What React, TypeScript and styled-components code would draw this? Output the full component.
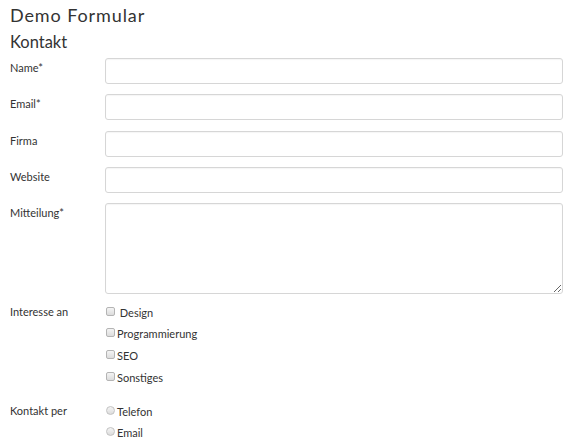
import React from "react";
import styled, { createGlobalStyle } from "styled-components";

const Global = createGlobalStyle`
  html, body { margin: 0; padding: 0; background: #fff; }
  body { font-family: Lato, "Open Sans", Arial, sans-serif; color: #333; }
  * { box-sizing: border-box; }
`;

const Page = styled.div`
  padding: 3px 13px 0 10px;
`;

const Title = styled.h1`
  margin: 0;
  font-size: 18px;
  font-weight: 400;
  letter-spacing: 0.9px;
  line-height: 24px;
  color: #333;
`;

const SubTitle = styled.h2`
  margin: 3px 0 4px;
  font-size: 16.5px;
  font-weight: 400;
  line-height: 24px;
  color: #333;
`;

const Row = styled.div<{ $gap?: number }>`
  display: grid;
  grid-template-columns: 95px 1fr;
  margin-bottom: ${(p) => (p.$gap ?? 10.3)}px;
`;

const Label = styled.label<{ $top?: number }>`
  font-size: 11px;
  line-height: 16px;
  padding-top: ${(p) => p.$top ?? 2}px;
  color: #333;
`;

const TextInput = styled.input`
  display: block;
  width: 100%;
  height: 26px;
  border: 1px solid #d6d6d6;
  border-radius: 3px;
  background: #fff;
  box-shadow: inset 0 1px 1px rgba(0, 0, 0, 0.04);
  font-family: inherit;
  font-size: 12px;
  padding: 4px 6px;
  outline: none;
`;

const TextArea = styled.textarea`
  display: block;
  width: 100%;
  height: 91px;
  border: 1px solid #d6d6d6;
  border-radius: 3px;
  background: #fff;
  box-shadow: inset 0 1px 1px rgba(0, 0, 0, 0.04);
  font-family: inherit;
  font-size: 12px;
  padding: 4px 6px;
  outline: none;
  resize: vertical;
`;

const Options = styled.div`
  display: flex;
  flex-direction: column;
`;

const Option = styled.label`
  display: flex;
  align-items: center;
  height: 21.7px;
  font-size: 11px;
  color: #333;
  white-space: pre;
`;

const Check = styled.input`
  appearance: none;
  width: 9px;
  height: 9px;
  margin: 0 2px 0 1px;
  border: 1px solid #b4b4b4;
  border-radius: 2px;
  background: linear-gradient(#f4f4f4, #dcdcdc);
  position: relative;
  top: -1px;
`;

const Radio = styled(Check)`
  border-radius: 50%;
  border-color: #c2c2c2;
`;

const interests = [" Design", "Programmierung", "SEO", "Sonstiges"];
const contacts = ["Telefon", "Email"];

export default function App() {
  return (
    <>
      <Global />
      <Page>
        <Title>Demo Formular</Title>
        <SubTitle>Kontakt</SubTitle>
        <Row>
          <Label $top={2}>Name*</Label>
          <TextInput />
        </Row>
        <Row>
          <Label>Email*</Label>
          <TextInput />
        </Row>
        <Row>
          <Label>Firma</Label>
          <TextInput />
        </Row>
        <Row>
          <Label>Website</Label>
          <TextInput />
        </Row>
        <Row $gap={7}>
          <Label>Mitteilung*</Label>
          <TextArea />
        </Row>
        <Row $gap={12.5}>
          <Label $top={3}>Interesse an</Label>
          <Options>
            {interests.map((t) => (
              <Option key={t}>
                <Check type="checkbox" />
                {t}
              </Option>
            ))}
          </Options>
        </Row>
        <Row $gap={0}>
          <Label $top={3}>Kontakt per</Label>
          <Options>
            {contacts.map((t) => (
              <Option key={t}>
                <Radio type="radio" name="kontakt" />
                {t}
              </Option>
            ))}
          </Options>
        </Row>
      </Page>
    </>
  );
}
